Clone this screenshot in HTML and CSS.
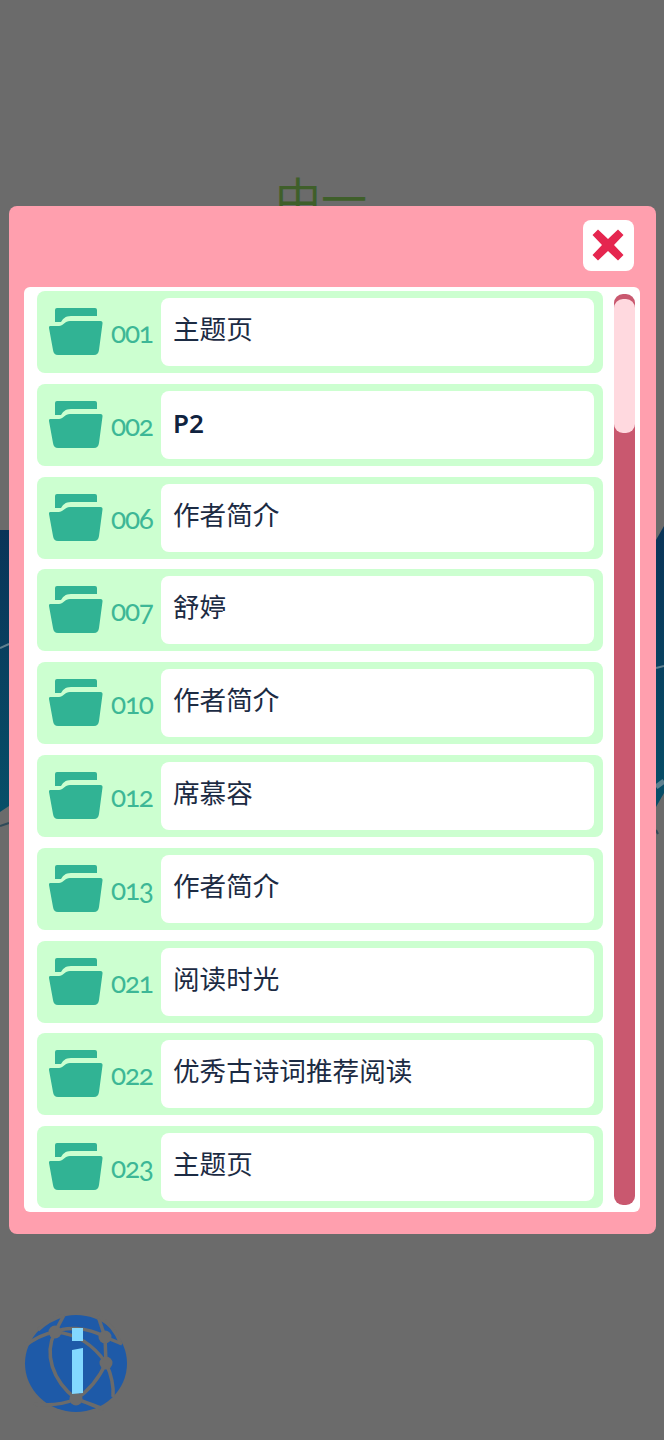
FILE: index.html
```html
<!DOCTYPE html>
<html lang="en">
<head>
  <meta charset="UTF-8">
  <meta name="viewport" content="width=device-width, initial-scale=1.0">
  <title>Chapters</title>
  <link rel="stylesheet" href="styles.css">
</head>
<body>

  <svg width="0" height="0" class="defs">
    <symbol id="folder" viewBox="0 0 54 48">
      <path d="M6 2a2 2 0 0 1 2-2H46a2 2 0 0 1 2 2V8H22C16 8 14 11 12 14H6z"/>
      <path d="M1.500 18H10C14 18 16 13 21 13H51.500C53 13 53.700 14 53.500 15.500L50 42C49.500 45.500 48 47 45 47H9C6 47 4.500 45.500 4 42L0 20C-.2 19 .3 18 1.500 18z"/>
    </symbol>
    <linearGradient id="bandFill" x1="0" y1="0" x2="0" y2="1">
      <stop offset="0" stop-color="#0a3458"/>
      <stop offset="1" stop-color="#064f68"/>
    </linearGradient>
  </svg>

  <div class="backdrop">
    <div class="page-title">中一</div>
    <svg class="bands" width="664" height="1440">
      <path fill="url(#bandFill)" d="M0 530H9V806L0 812z"/>
      <path fill="url(#bandFill)" d="M656 540 664 526V793L656 807z"/>
      <path class="band-line" d="M0 648 9 644M656 668 664 666"/>
      <path class="band-line wide" d="M656 787 664 781"/>
      <path class="band-dark" d="M0 826 9 823M656 830 658 834"/>
    </svg>
  </div>

  <div class="modal">
    <div class="modal-head">
      <button class="close-btn">
        <svg width="34" height="34" viewBox="0 0 34 34">
          <path class="cross" d="M7 1.500 17 11 27 1.500 32.500 7 23 17 32.500 27 27 32.500 17 23 7 32.500 1.500 27 11 17 1.500 7z"/>
        </svg>
      </button>
    </div>

    <div class="modal-body">
      <div class="chapter-list" id="chapterList"></div>
      <div class="scroll-track"><div class="scroll-thumb"></div></div>
    </div>
  </div>

  <svg class="info-logo" width="104" height="100" viewBox="0 0 104 100">
    <ellipse class="globe" cx="52" cy="49.500" rx="51" ry="48.500"/>
    <g class="globe-lines">
      <path d="M-2 34C8 26 18 20 31 18"/>
      <path d="M31 18 40 1"/>
      <path d="M14 16C22 8 30 4 40 1"/>
      <path d="M31 18C40 13 62 12 81 23"/>
      <path d="M81 23 74 2"/>
      <path d="M74 2C84 8 92 16 97 30"/>
      <path d="M81 23 98 30"/>
      <path d="M81 23 82 49"/>
      <path d="M31 18C55 20 70 32 82 49"/>
      <path d="M82 49C76 62 66 76 52 85"/>
      <path d="M82 49C87 60 90 72 89 83"/>
      <path d="M31 18C20 40 28 66 52 85"/>
      <path d="M52 85C40 90 25 92 10 90"/>
      <path d="M52 85C62 88 70 92 80 95"/>
    </g>
    <g class="globe-nodes">
      <circle cx="31" cy="18" r="6.500"/>
      <circle cx="81" cy="23" r="6.500"/>
      <circle cx="82" cy="49" r="6.500"/>
      <circle cx="52" cy="85" r="6.500"/>
    </g>
    <path class="info-i" d="M48 14H59V27H48zM48 36 59 34V79L48 80z"/>
  </svg>

  <script>
    const chapters = [
      { num: "001", name: "主题页" },
      { num: "002", name: "P2", bold: true },
      { num: "006", name: "作者简介" },
      { num: "007", name: "舒婷" },
      { num: "010", name: "作者简介" },
      { num: "012", name: "席慕容" },
      { num: "013", name: "作者简介" },
      { num: "021", name: "阅读时光" },
      { num: "022", name: "优秀古诗词推荐阅读" },
      { num: "023", name: "主题页" },
    ];

    const chapterList = document.getElementById("chapterList");

    chapters.forEach(c => {
      const div = document.createElement("div");
      div.classList.add("chapter");
      div.innerHTML = `
        <svg class="folder" width="54" height="48"><use href="#folder"/></svg>
        <span class="chapter-num">${c.num}</span>
        <div class="chapter-name${c.bold ? " bold" : ""}">${c.name}</div>
      `;
      chapterList.appendChild(div);
    });
  </script>

</body>
</html>
```

FILE: styles.css
```css
html, body {
  margin: 0;
  height: 1440px;
}
body {
  position: relative;
  overflow: hidden;
  background-color: #6b6b6b;
  font-family: "Noto Sans CJK SC", "Noto Sans", sans-serif;
}
.defs {
  position: absolute;
}

/* page behind the dimmed layer */
.backdrop {
  position: absolute;
  inset: 0;
}
.page-title {
  position: absolute;
  top: 166px;
  left: 0;
  right: 0;
  padding-right: 22px;
  text-align: center;
  font-size: 46px;
  line-height: 60px;
  color: #3f5f2a;
}
.bands {
  position: absolute;
  top: 0;
  left: 0;
}
.band-line {
  fill: none;
  stroke: #5f8190;
  stroke-width: 2;
}
.band-line.wide {
  stroke-width: 5;
}
.band-dark {
  fill: none;
  stroke: #2f4a58;
  stroke-width: 2;
}

/* modal */
.modal {
  position: absolute;
  top: 206px;
  left: 9px;
  width: 647px;
  height: 1028px;
  box-sizing: border-box;
  padding: 14px 16px 22px 15px;
  background-color: #ff9fae;
  border-radius: 8px;
  display: flex;
  flex-direction: column;
}
.modal-head {
  height: 67px;
  display: flex;
  justify-content: flex-end;
  flex-shrink: 0;
}
.close-btn {
  width: 51px;
  height: 51px;
  margin-right: 6px;
  padding: 0 2px 2px 0;
  border: 0;
  border-radius: 8px;
  background-color: #fff;
  display: flex;
  align-items: center;
  justify-content: center;
}
.cross {
  fill: #e5264f;
}
.modal-body {
  flex: 1;
  min-height: 0;
  display: flex;
  gap: 11px;
  padding: 4px 0 6px 13px;
  box-sizing: border-box;
  background-color: #fff;
  border-radius: 6px;
}

/* list */
.chapter-list {
  width: 566px;
  display: flex;
  flex-direction: column;
  gap: 10.8px;
}
.chapter {
  height: 82px;
  box-sizing: border-box;
  padding: 7px 9px 7px 12px;
  display: flex;
  align-items: center;
  background-color: #ccffd0;
  border-radius: 8px;
  flex-shrink: 0;
}
.folder {
  fill: #31b394;
  flex-shrink: 0;
}
.chapter-num {
  width: 58px;
  box-sizing: border-box;
  padding: 0 0 0 8px;
  font-family: Lato, sans-serif;
  font-size: 28px;
  letter-spacing: -1.2px;
  color: #3db796;
  font-feature-settings: "onum";
  flex-shrink: 0;
}
.chapter-name {
  flex: 1;
  align-self: stretch;
  box-sizing: border-box;
  padding: 8px 12px 0;
  background-color: #fff;
  border-radius: 8px;
  font-size: 26.6px;
  line-height: 44px;
  color: #1c2b43;
}
.chapter-name.bold {
  padding-top: 10px;
  font-family: "Noto Sans", sans-serif;
  font-size: 26px;
  font-weight: 600;
  color: #10233f;
}

/* scrollbar */
.scroll-track {
  width: 21px;
  margin: 3px 0 1px;
  background-color: #c9586f;
  border-radius: 9px;
}
.scroll-thumb {
  width: 21px;
  height: 134px;
  margin-top: 5px;
  background-color: #ffd9df;
  border-radius: 9px;
}

/* info logo */
.info-logo {
  position: absolute;
  left: 24px;
  top: 1314px;
}
.globe {
  fill: #1e5aa8;
}
.globe-lines {
  fill: none;
  stroke: #6b6b6b;
  stroke-width: 3.5;
}
.globe-nodes {
  fill: #6b6b6b;
}
.info-i {
  fill: #82d8ff;
}
```
